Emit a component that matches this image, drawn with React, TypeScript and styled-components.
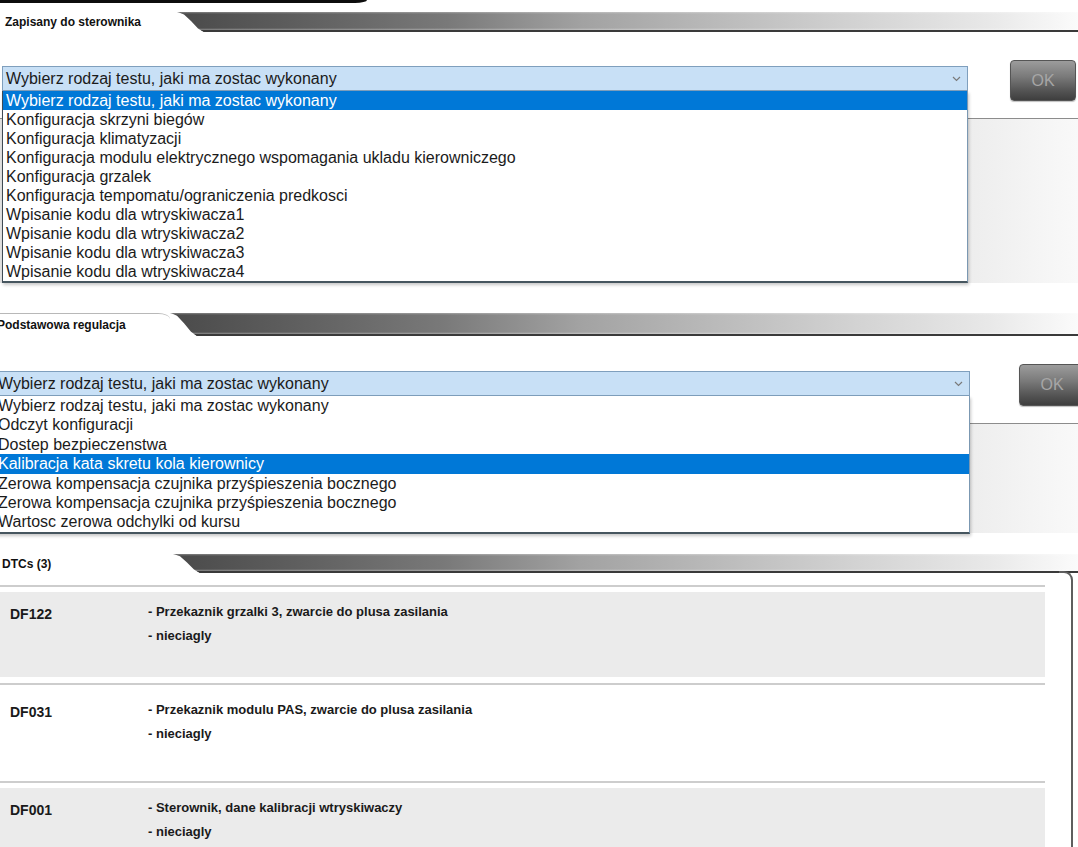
import React from "react";
import styled, { createGlobalStyle } from "styled-components";

const GlobalStyle = createGlobalStyle`
  html, body { margin: 0; padding: 0; background: #ffffff; }
  body { font-family: "Liberation Sans", Arial, sans-serif; color: #111; }
  * { box-sizing: border-box; }
`;

const Page = styled.div`
  width: 1078px;
  height: 847px;
  overflow: hidden;
  background: #fff;
  display: flex;
  flex-direction: column;
`;

const TopStrip = styled.div`
  width: 367px;
  height: 3px;
  flex-shrink: 0;
  background: #0d0d0d;
  border-bottom-right-radius: 12px 3px;
`;

const Section = styled.section<{ $shift: number; $gap: number }>`
  margin-left: ${(p) => p.$shift}px;
  margin-top: ${(p) => p.$gap}px;
  display: flex;
  flex-direction: column;
  flex-shrink: 0;
`;

const Header = styled.div<{ $h: number }>`
  display: flex;
  height: ${(p) => p.$h}px;
`;

const Title = styled.div<{ $w: number; $ruled?: boolean }>`
  width: ${(p) => p.$w}px;
  flex-shrink: 0;
  padding-left: 5px;
  display: flex;
  align-items: center;
  font-size: 12px;
  font-weight: bold;
  color: #111;
  white-space: nowrap;
  ${(p) =>
    p.$ruled
      ? `border-top: 1px solid #b8b8b8; border-top-right-radius: 12px 6px;`
      : ""}
`;

const TabBar = styled.div`
  flex: 1;
  background:
    linear-gradient(to top, #3a3a3a 0, #3a3a3a 1.5px, rgba(255,255,255,0.35) 2px, rgba(255,255,255,0) 4px),
    linear-gradient(to bottom, rgba(255,255,255,0.3) 0, rgba(255,255,255,0) 2px),
    linear-gradient(90deg, #4a4a4a 0%, #5c5c5c 12%, #797979 30%, #a2a2a2 45%, #bababa 60%, #d2d2d2 75%, #e8e8e8 90%, #fbfbfb 100%);
  clip-path: polygon(0 0, 100% 0, 100% 100%, 27px 100%, 21px 82%, 14px 45%, 7px 12%, 2px 2%);
`;

const ControlRow = styled.div<{ $gap: number }>`
  display: flex;
  align-items: flex-start;
  margin-top: ${(p) => p.$gap}px;
  position: relative;
  z-index: 2;
`;

const SelectWrap = styled.div<{ $w: number; $offset: number }>`
  position: relative;
  width: ${(p) => p.$w}px;
  margin-left: 2px;
  margin-top: ${(p) => p.$offset}px;
`;

const SelectBox = styled.div`
  height: 25px;
  background: #c8e0f6;
  border: 1px solid #7f9fbd;
  display: flex;
  align-items: center;
  justify-content: space-between;
  padding: 0 6px 0 3px;
  font-size: 16px;
  color: #1b1b1b;
  white-space: nowrap;
`;

const DropList = styled.ul`
  position: absolute;
  left: 0;
  right: 0;
  top: 100%;
  margin: 0;
  padding: 0;
  list-style: none;
  background: #fff;
  border-left: 1px solid #3f4a54;
  border-right: 1px solid #7b98b2;
  border-bottom: 2px solid #46565f;
  box-shadow: 1px 2px 3px rgba(0, 0, 0, 0.22);
`;

const Option = styled.li<{ $active?: boolean; $h: number }>`
  height: ${(p) => p.$h}px;
  line-height: ${(p) => p.$h}px;
  padding-left: 3px;
  font-size: 16px;
  white-space: nowrap;
  background: ${(p) => (p.$active ? "#0078d7" : "transparent")};
  color: ${(p) => (p.$active ? "#ffffff" : "#1b1b1b")};
`;

const OkButton = styled.button<{ $right: number; $h: number }>`
  margin-left: auto;
  margin-right: ${(p) => p.$right}px;
  width: 66px;
  height: ${(p) => p.$h}px;
  border-radius: 4px;
  border: 1px solid #555;
  background: linear-gradient(to bottom, #9c9c9c 0%, #7a7a7a 40%, #555 75%, #3e3e3e 100%);
  color: #a6a6a6;
  font-family: "Liberation Sans", Arial, sans-serif;
  font-size: 16px;
  padding: 0;
  box-shadow: 0 1px 1px rgba(0, 0, 0, 0.25);
`;

const BackPanel = styled.div<{ $gap: number; $h: number }>`
  margin-top: ${(p) => p.$gap}px;
  height: ${(p) => p.$h}px;
  border-top: 1px solid #8c8c8c;
  background: linear-gradient(90deg, #e3e3e3 0%, #ebebeb 88%, #f9f9f9 100%);
`;

const DtcBox = styled.div`
  position: relative;
  margin-right: 5px;
  padding: 12px 28px 0 0;
  &::after {
    content: "";
    position: absolute;
    top: -2px;
    right: 0;
    bottom: 0;
    width: 12px;
    border-top: 2px solid #5e5e5e;
    border-right: 2px solid #5e5e5e;
    border-top-right-radius: 9px;
  }
`;

const Rule = styled.div`
  height: 2px;
  background: #cdcdcd;
`;

const RowBody = styled.div<{ $shade: boolean }>`
  margin: 5px 0 6px;
  height: 85px;
  display: flex;
  background: ${(p) => (p.$shade ? "#ebebeb" : "#ffffff")};
`;

const Code = styled.div`
  width: 151px;
  flex-shrink: 0;
  padding: 12px 0 0 13px;
  font-size: 14px;
  font-weight: bold;
  line-height: 20px;
  color: #1a1a1a;
`;

const Desc = styled.div`
  padding-top: 8px;
  font-size: 13px;
  font-weight: bold;
  line-height: 24px;
  color: #1a1a1a;
  white-space: nowrap;
`;

const Chevron = () => (
  <svg width="9" height="6" viewBox="0 0 9 6">
    <path d="M1 1l3.5 3.5L8 1" fill="none" stroke="#7a7a7a" strokeWidth="1.2" />
  </svg>
);

const PLACEHOLDER = "Wybierz rodzaj testu, jaki ma zostac wykonany";

const options1 = [
  PLACEHOLDER,
  "Konfiguracja skrzyni biegów",
  "Konfiguracja klimatyzacji",
  "Konfiguracja modulu elektrycznego wspomagania ukladu kierowniczego",
  "Konfiguracja grzalek",
  "Konfiguracja tempomatu/ograniczenia predkosci",
  "Wpisanie kodu dla wtryskiwacza1",
  "Wpisanie kodu dla wtryskiwacza2",
  "Wpisanie kodu dla wtryskiwacza3",
  "Wpisanie kodu dla wtryskiwacza4",
];

const options2 = [
  PLACEHOLDER,
  "Odczyt konfiguracji",
  "Dostep bezpieczenstwa",
  "Kalibracja kata skretu kola kierownicy",
  "Zerowa kompensacja czujnika przyśpieszenia bocznego",
  "Zerowa kompensacja czujnika przyśpieszenia bocznego",
  "Wartosc zerowa odchylki od kursu",
];

const dtcs = [
  { code: "DF122", text: "- Przekaznik grzalki 3, zwarcie do plusa zasilania", shade: true },
  { code: "DF031", text: "- Przekaznik modulu PAS, zwarcie do plusa zasilania", shade: false },
  { code: "DF001", text: "- Sterownik, dane kalibracji wtryskiwaczy", shade: true },
];

type PickerProps = {
  options: string[];
  active: number;
  width: number;
  offset: number;
  rowH: number;
};

const Picker = ({ options, active, width, offset, rowH }: PickerProps) => (
  <SelectWrap $w={width} $offset={offset}>
    <SelectBox>
      <span>{PLACEHOLDER}</span>
      <Chevron />
    </SelectBox>
    <DropList>
      {options.map((o, i) => (
        <Option key={i} $active={i === active} $h={rowH}>
          {o}
        </Option>
      ))}
    </DropList>
  </SelectWrap>
);

export default function App() {
  return (
    <>
      <GlobalStyle />
      <Page>
        <TopStrip />

        <Section $shift={0} $gap={9}>
          <Header $h={20}>
            <Title $w={177}>Zapisany do sterownika</Title>
            <TabBar />
          </Header>
          <ControlRow $gap={28}>
            <Picker options={options1} active={0} width={966} offset={6} rowH={19} />
            <OkButton $right={2} $h={41}>OK</OkButton>
          </ControlRow>
          <BackPanel $gap={17} $h={165} />
        </Section>

        <Section $shift={-8} $gap={30}>
          <Header $h={23}>
            <Title $w={178} $ruled>Podstawowa regulacja</Title>
            <TabBar />
          </Header>
          <ControlRow $gap={28}>
            <Picker options={options2} active={3} width={976} offset={7} rowH={19.4} />
            <OkButton $right={-7} $h={42}>OK</OkButton>
          </ControlRow>
          <BackPanel $gap={17} $h={110} />
        </Section>

        <Section $shift={-3} $gap={21}>
          <Header $h={19}>
            <Title $w={176}>DTCs (3)</Title>
            <TabBar />
          </Header>
          <DtcBox>
            {dtcs.map((d) => (
              <div key={d.code}>
                <Rule />
                <RowBody $shade={d.shade}>
                  <Code>{d.code}</Code>
                  <Desc>
                    <div>{d.text}</div>
                    <div>- nieciagly</div>
                  </Desc>
                </RowBody>
              </div>
            ))}
          </DtcBox>
        </Section>
      </Page>
    </>
  );
}
